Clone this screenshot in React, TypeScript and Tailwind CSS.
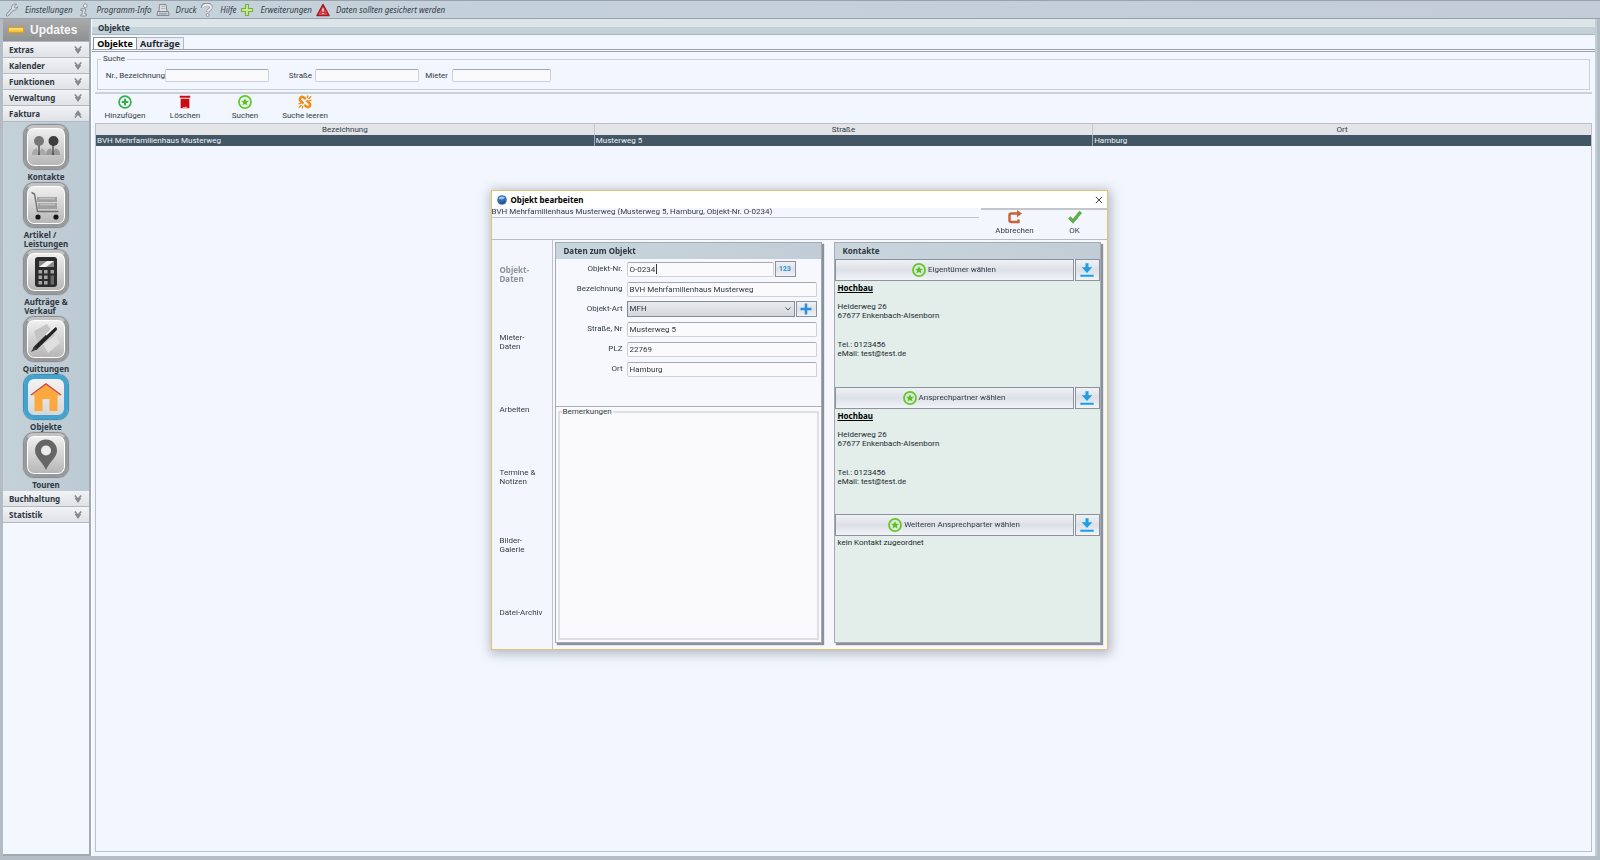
import type { ReactNode } from "react"

const accordionTop = ["Extras", "Kalender", "Funktionen", "Verwaltung"]
const accordionBottom = ["Buchhaltung", "Statistik"]

const tiles = [
  { label: ["Kontakte"], icon: <ContactsIcon /> },
  { label: ["Artikel /", "Leistungen"], icon: <CartIcon /> },
  { label: ["Aufträge &", "Verkauf"], icon: <CalculatorIcon /> },
  { label: ["Quittungen"], icon: <ReceiptIcon /> },
  { label: ["Objekte"], icon: <HouseIcon />, active: true },
  { label: ["Touren"], icon: <PinIcon /> },
]

const dialogNav = [["Objekt-", "Daten"], ["Mieter-", "Daten"], ["Arbeiten"], ["Termine &", "Notizen"], ["Bilder-", "Galerie"], ["Datei-Archiv"]]

const fieldClass =
  "min-w-0 rounded-[2px] border border-[#cdd1d7] border-t-[#a3aab2] bg-[#fafafc] px-[2px] text-[8px] leading-[10px] text-[#2f3842] outline-none"
const raisedClass =
  "flex items-center justify-center border border-[#8b929c] bg-linear-to-b from-[#eef1f5] via-[#dde0e6] to-[#f0f3f8]"
const boldFont = "font-['Noto_Sans',sans-serif] font-bold"

/* ---------- Icons ---------- */

function WrenchIcon() {
  return (
    <svg viewBox="0 0 14 14" className="size-[14px]">
      <path d="M2.6 11.8 8 5.8" stroke="#7d858d" strokeWidth="3.2" strokeLinecap="round" />
      <path d="M11.6 1.2 9.6 1a3.2 3.2 0 0 0-2.9 4.2c.5 1.6 2.3 2.2 3.8 1.7a3.1 3.1 0 0 0 2.2-3.2l-1.9 1.5-1.4-.7-.1-1.6z" fill="#dde1e5" stroke="#7d858d" strokeWidth=".8" />
      <path d="M2.6 11.8 8.4 5.4" stroke="#dde1e5" strokeWidth="1.6" strokeLinecap="round" />
    </svg>
  )
}

function InfoIcon() {
  return (
    <svg viewBox="0 0 14 14" className="size-[14px]">
      <circle cx="8.3" cy="2.7" r="1.9" fill="#eef0f2" stroke="#858c94" strokeWidth=".9" />
      <path d="M4 5.8h4.8L7.7 11h1.8l-.4 2H3.6l.4-1.5h1L5.8 7.5H3.8z" fill="#dfe2e5" stroke="#858c94" strokeWidth=".9" strokeLinejoin="round" />
    </svg>
  )
}

function PrinterIcon() {
  return (
    <svg viewBox="0 0 14 14" className="size-[14px]">
      <path d="M3.5 1.5h6.500l1 7H3z" fill="#dce0e3" stroke="#7b8289" strokeWidth=".9" />
      <path d="M5 3.500h4M5 5.500h4.400" stroke="#a5abb1" strokeWidth=".8" />
      <path d="M1.500 8.500h11l.5 4H1z" fill="#c9ced3" stroke="#7b8289" strokeWidth=".9" strokeLinejoin="round" />
      <path d="M3 10.800h8" stroke="#858c93" strokeWidth=".9" />
    </svg>
  )
}

function HelpIcon() {
  return (
    <svg viewBox="0 0 14 14" className="size-[14px]">
      <path d="M2.500 4.700C2 .2 11.500.2 11 4.500 10.800 7 8 6.400 7.700 9" fill="none" stroke="#848b93" strokeWidth="3.200" />
      <path d="M3 4.600C2.800.8 11.200.8 11 4.500 10.800 7 8 6.400 7.700 8.700" fill="none" stroke="#eceef0" strokeWidth="2" />
      <circle cx="7.600" cy="12" r="1.500" fill="#eceef0" stroke="#848b93" strokeWidth=".8" />
    </svg>
  )
}

function GreenPlusIcon() {
  return (
    <svg viewBox="0 0 14 14" className="size-[14px]">
      <path d="M5.500 1.500h3v4h4v3h-4v4h-3v-4h-4v-3h4z" fill="#c8ec8e" stroke="#7bab45" strokeWidth="1.100" strokeLinejoin="round" />
    </svg>
  )
}

function WarningIcon() {
  return (
    <svg viewBox="0 0 14 14" className="size-[14px]">
      <path d="M7 1.500 13 12.500H1z" fill="#cf2530" stroke="#a51a27" strokeWidth="1.500" strokeLinejoin="round" />
      <path d="M7 4.500 10.800 11.300H3.200z" fill="none" stroke="#e9848a" strokeWidth=".6" />
      <path d="M7 5.500v3.300M7 9.800v1.200" stroke="#fff" strokeWidth="1.300" />
    </svg>
  )
}

function Chevrons({ up }: { up?: boolean }) {
  return (
    <svg viewBox="0 0 8 8" className={up ? "size-2 rotate-180" : "size-2"} fill="none" stroke="#858a91" strokeWidth="1.600">
      <path d="M.8.500 4 4.200 7.200.500M1.500 3 4 6.500 6.500 3" />
    </svg>
  )
}

function AddIcon() {
  return (
    <svg viewBox="0 0 16 16" className="size-[14px]" fill="none" stroke="#35b04a">
      <circle cx="8" cy="8" r="6.800" strokeWidth="1.900" />
      <path d="M8 4.200v7.600M4.200 8h7.600" strokeWidth="2.400" />
    </svg>
  )
}

function TrashIcon() {
  return (
    <svg viewBox="0 0 16 16" className="size-[14px]" fill="#cc0a12">
      <path d="M2 .8h12v2.400H2zM3 4.200h10v11H3z" />
      <path d="M5 14.600c1-1.600 2-.3 3-.8s2-.8 3 .8z" fill="#f3d6da" />
    </svg>
  )
}

function StarIcon() {
  return (
    <svg viewBox="0 0 16 16" className="size-[14px]">
      <circle cx="8" cy="8" r="6.900" fill="none" stroke="#62cb23" strokeWidth="2" />
      <path d="m8 3.500 1.300 3 3.200.2-2.400 2.100.7 3.200L8 10.300 5.200 12l.7-3.200-2.400-2.100 3.200-.2z" fill="#58c41c" />
    </svg>
  )
}

function BrokenChainIcon() {
  return (
    <svg viewBox="0 0 16 16" className="size-[14px]" fill="none" stroke="#f08c14">
      <path d="M8.800 4.800 6.800 3C5.500 1.900 3.900 2 2.900 3S1.900 5.600 3 6.800l3.200 3.100M7.200 11.200l2 1.800c1.300 1.100 2.900 1 3.900 0s1-2.600-.1-3.800L9.800 6.100" strokeWidth="2.800" />
      <path d="m10.400 3.600.8-3M12 4.600l3-3.100M12.400 6.600l3-.6M5.600 12.400l-.8 3M4 11.400l-3 3.100M3.600 9.400l-3 .6" strokeWidth="1.500" />
    </svg>
  )
}

function DownloadIcon() {
  return (
    <svg viewBox="0 0 14 14" className="size-[14px]" fill="#1b9fe6">
      <path d="M5.500.3h3v4h3.800L7 10 1.700 4.300h3.800zM.3 11.800h13.400v1.900H.3z" />
    </svg>
  )
}

function CancelIcon() {
  return (
    <svg viewBox="0 0 14 14" className="size-[14px]">
      <path d="M9.500 3.500H3.200c-1.200 0-1.700.6-1.700 1.700v5.100c0 1.200.6 1.700 1.700 1.700h7.300V9.600" fill="none" stroke="#c8643c" strokeWidth="2.500" />
      <path d="M9 0 14 3.600 9 7.200z" fill="#c8643c" />
    </svg>
  )
}

function CheckIcon() {
  return (
    <svg viewBox="0 0 14 14" className="size-[14px]">
      <path d="M1.200 7.400 5 11.300 12.700 1.800" fill="none" stroke="#62ac4f" strokeWidth="3.400" />
    </svg>
  )
}

function ContactsIcon() {
  return (
    <svg viewBox="0 0 32 32" className="size-8">
      <path d="M2 24c0-5 3-7 7-7s7 2 7 7z" fill="#a9a9a9" />
      <path d="M16 24c0-5 3-7 7-7s7 2 7 7z" fill="#9a9a9a" />
      <path d="M7 17h4l-2 6zM21 17h4l-2 6z" fill="#dedede" />
      <path d="M9 14v10M23 14v10" stroke="#1d1d1d" strokeWidth="1.100" />
      <circle cx="9" cy="10" r="5" fill="#777" />
      <circle cx="23.500" cy="10" r="5" fill="#3d3d3d" />
    </svg>
  )
}

function CartIcon() {
  return (
    <svg viewBox="0 0 32 32" className="size-8">
      <path d="M7 8h20v5H7zM8 14h19v6H8z" fill="#a0a0a0" />
      <path d="M9 9.500h16M10 15.500h15" stroke="#c2c2c2" strokeWidth="1.500" />
      <path d="M1.500 3.500 4.500 5l3 17.500h21" fill="none" stroke="#707070" strokeWidth="1.400" />
      <circle cx="8" cy="28" r="2.600" fill="#151515" />
      <circle cx="26" cy="28" r="2.600" fill="#151515" />
    </svg>
  )
}

function CalculatorIcon() {
  return (
    <svg viewBox="0 0 32 32" className="size-8">
      <rect x="5" y="1" width="22" height="30" rx="3" fill="#2b2b2b" />
      <path d="M9 5h15v6H9z" fill="#8c8c8c" />
      <path d="m9 11 8-6h7l-8 6z" fill="#f2f2f2" />
      <path d="M8.500 14h3.600v3.600H8.500zM14 14h3.600v3.600H14zM8.500 19.500h3.600v3.600H8.500zM14 19.500h3.600v3.600H14zM8.500 25h3.600v3.600H8.500zM14 25h3.600v3.600H14zM20.500 14H24v3.600h-3.500z" fill="#a4a4a4" />
      <path d="M20.500 19.500H24v9.100h-3.500z" fill="#686868" />
    </svg>
  )
}

function ReceiptIcon() {
  return (
    <svg viewBox="0 0 32 32" className="size-8">
      <path d="M4 8 17 1l12 18-12 10-5-9-5-1z" fill="#c4c4c4" />
      <path d="m13 21 13-9 4 8-12 10z" fill="#dfdfdf" />
      <path d="M5.500 25 25 6" stroke="#242424" strokeWidth="4" strokeLinecap="round" />
      <path d="m16 12 9-8.500" stroke="#fafafa" strokeWidth="1.500" />
      <path d="m1 29 3.500-6 3 3z" fill="#3b3b3b" />
    </svg>
  )
}

function HouseIcon() {
  return (
    <svg viewBox="0 0 32 32" className="size-8">
      <path d="M4.500 30V14.500H2L16 3.500l14 11h-2.500V30h-8V18h-7v12z" fill="#fba83f" />
      <path d="M1 14 16 3l15 11" fill="none" stroke="#cf4a3b" strokeWidth="1.500" />
    </svg>
  )
}

function PinIcon() {
  return (
    <svg viewBox="0 0 32 32" className="size-8">
      <path d="M16 31C13 23 5 19 5 11.500a11 11 0 0 1 22 0C27 19 19 23 16 31z" fill="#666" />
      <circle cx="16" cy="11.500" r="5" fill="#ececec" />
    </svg>
  )
}

/* ---------- Main window ---------- */

const menu = [
  { label: "Einstellungen", icon: <WrenchIcon /> },
  { label: "Programm-Info", icon: <InfoIcon /> },
  { label: "Druck", icon: <PrinterIcon /> },
  { label: "Hilfe", icon: <HelpIcon /> },
  { label: "Erweiterungen", icon: <GreenPlusIcon /> },
  { label: "Daten sollten gesichert werden", icon: <WarningIcon /> },
]

function MenuBar() {
  return (
    <nav className="flex h-[19px] items-center gap-1 border-y border-[#98a2ac] bg-linear-to-r from-[#c6d3db] to-[#c3ccd7] pl-[5px]">
      {menu.map((m) => (
        <button key={m.label} className="flex items-center gap-[6px] font-['Noto_Sans',sans-serif] text-[8px] text-[#333b44] italic">
          {m.icon}
          {m.label}
        </button>
      ))}
    </nav>
  )
}

function AccordionHeader({ label, open }: { label: string; open?: boolean }) {
  return (
    <button className={`${boldFont} flex h-4 w-full items-center justify-between border-b border-[#b3b9c0] bg-linear-to-b from-[#f1f3f5] to-[#dfe2e6] pr-[7px] pl-[6px] text-[8px] text-[#2f3740]`}>
      {label}
      <Chevrons up={open} />
    </button>
  )
}

function Sidebar() {
  return (
    <aside className="flex w-[88px] shrink-0 flex-col border-r-2 border-b-2 border-[#a2a9b2] bg-[#f3f7fe]">
      <button className="flex h-[23px] items-center gap-[6px] border-b border-[#b3b9c0] bg-linear-to-b from-[#a9aaab] to-[#8e9091] pl-[5px] font-['Liberation_Sans',sans-serif] text-[12px] font-bold text-[#f6f6f6]">
        <span className="h-[6px] w-4 rounded-[1px] border border-[#d8a313] bg-linear-to-b from-[#ffe27a] to-[#f5bd1c]" />
        Updates
      </button>
      {accordionTop.map((a) => (
        <AccordionHeader key={a} label={a} />
      ))}
      <AccordionHeader label="Faktura" open />
      <div className="flex flex-col items-center bg-linear-to-r from-[#c5d1d9] to-[#bccad3] pt-[3px]">
        {tiles.map((t) => (
          <button key={t.label[0]} className={`${boldFont} flex flex-col items-center text-[8px] leading-[9px] text-[#2f3740]`}>
            <span
              className={
                t.active
                  ? "flex size-11 items-center justify-center rounded-[10px] border-4 border-[#41a3cf] bg-linear-to-b from-[#f3f3f3] to-[#d4d6d8] shadow-[0_0_1px_1px_#3b88ab]"
                  : "flex size-11 items-center justify-center rounded-[10px] border-[3px] border-[#999] border-t-[#c2c2c2] bg-linear-to-b from-[#f1f1f1] to-[#b5b5b5] shadow-[inset_0_0_0_1px_#fff,0_0_1px_1px_#85898c]"
              }
            >
              {t.icon}
            </span>
            <span className="pt-[3px] pb-[2px] text-left">
              {t.label.map((line) => (
                <span key={line} className="block">{line}</span>
              ))}
            </span>
          </button>
        ))}
      </div>
      {accordionBottom.map((a) => (
        <AccordionHeader key={a} label={a} />
      ))}
    </aside>
  )
}

function ToolButton({ label, icon }: { label: string; icon: ReactNode }) {
  return (
    <button className="flex w-[60px] flex-col items-center gap-[2px] text-[8px] leading-[10px] whitespace-nowrap text-[#333c46]">
      {icon}
      {label}
    </button>
  )
}

function SearchPanel() {
  return (
    <fieldset className="mx-[5px] mt-[2px] flex h-9 items-center border border-[#c8cfd7] pt-[5px] text-[8px] text-[#333c46]">
      <legend className="ml-[3px] px-[2px] leading-[10px]">Suche</legend>
      <label htmlFor="nr" className="w-[67px] text-right whitespace-nowrap">Nr., Bezeichnung</label>
      <input id="nr" className={`${fieldClass} h-[13px] w-[104px]`} />
      <label htmlFor="strasse" className="w-[46px] pr-[3px] text-right">Straße</label>
      <input id="strasse" className={`${fieldClass} h-[13px] w-[104px]`} />
      <label htmlFor="mieter" className="w-[33px] pr-1 text-right">Mieter</label>
      <input id="mieter" className={`${fieldClass} h-[13px] w-[99px]`} />
    </fieldset>
  )
}

function MainPanel() {
  return (
    <main className="mr-[2px] flex min-w-0 flex-1 flex-col border-l border-white bg-[#f2f6fe]">
      <h1 className={`${boldFont} h-4 border-b border-[#a9b5bd] bg-linear-to-b from-[#dbe5ea] from-55% to-[#c3d1d8] to-55% pl-[6px] text-[8px] leading-[17px] text-[#2f3740]`}>
        Objekte
      </h1>
      <div className={`${boldFont} flex h-[17px] items-end border-b-[3px] border-double border-[#9ba2ab] pt-[2px] pl-[1px] text-[9px] leading-3`}>
        <button className="h-full w-11 border border-b-0 border-[#8d949c] bg-white text-black">Objekte</button>
        <button className="h-full w-[47px] border border-b-0 border-l-0 border-[#b3bac2] bg-[#e9eef4] text-[#22282e]">Aufträge</button>
      </div>
      <SearchPanel />
      <div className="mx-[3px] mt-[2px] flex h-[31px] items-start border-t-2 border-[#ccd1d7] pt-[1px]">
        <ToolButton label="Hinzufügen" icon={<AddIcon />} />
        <ToolButton label="Löschen" icon={<TrashIcon />} />
        <ToolButton label="Suchen" icon={<StarIcon />} />
        <ToolButton label="Suche leeren" icon={<BrokenChainIcon />} />
      </div>
      <div className="mx-[3px] mb-1 flex-1 border border-[#b9c0c8]">
        <table className="w-full table-fixed border-collapse text-[8px] leading-[10px]">
          <thead>
            <tr className="h-[11px] bg-[#e2e4e8] text-[#333c46]">
              <th className="border-r border-[#c3c8ce] p-0 font-normal">Bezeichnung</th>
              <th className="border-r border-[#c3c8ce] p-0 font-normal">Straße</th>
              <th className="p-0 font-normal">Ort</th>
            </tr>
          </thead>
          <tbody>
            <tr className="h-[11px] bg-[#425666] text-[#eef2f5]">
              <td className="border-r border-[#9aa6b0] py-0 pr-0 pl-[1px]">BVH Mehrfamilienhaus Musterweg</td>
              <td className="border-r border-[#9aa6b0] py-0 pr-0 pl-[1px]">Musterweg 5</td>
              <td className="py-0 pr-0 pl-[1px]">Hamburg</td>
            </tr>
          </tbody>
        </table>
      </div>
    </main>
  )
}

/* ---------- Dialog ---------- */

function FormRow({ id, label, children }: { id: string; label: string; children: ReactNode }) {
  return (
    <div className="flex h-5 items-center">
      <label htmlFor={id} className="w-[67px] shrink-0 pr-1 text-right">{label}</label>
      {children}
    </div>
  )
}

function Panel({ title, children }: { title: string; children: ReactNode }) {
  return (
    <section className="flex flex-1 flex-col border border-[#a4abb4] shadow-[2px_2px_1px_#8b919a]">
      <h2 className={`${boldFont} h-4 shrink-0 bg-linear-to-r from-[#c9d6de] to-[#c2ccd6] pl-2 text-[8px] leading-[15px] text-[#2f3740]`}>{title}</h2>
      {children}
    </section>
  )
}

function ObjectForm() {
  return (
    <Panel title="Daten zum Objekt">
      <div className="h-[147px] shrink-0 pr-1 pl-1 text-[8px] text-[#333c46]">
        <FormRow id="objnr" label="Objekt-Nr.">
          <div className="relative flex w-[147px]">
            <input id="objnr" defaultValue="O-0234" className={`${fieldClass} h-[15px] w-full`} />
            {/* text cursor */}
            <span className="absolute top-[2px] left-[29px] h-[10px] w-[1px] bg-[#2f3842]" />
          </div>
          <button className={`${raisedClass} ml-[1px] h-4 w-[21px] text-[7px] font-bold text-[#2d93d3]`}>123</button>
        </FormRow>
        <FormRow id="bez" label="Bezeichnung">
          <input id="bez" defaultValue="BVH Mehrfamilienhaus Musterweg" className={`${fieldClass} h-[15px] flex-1`} />
        </FormRow>
        <FormRow id="art" label="Objekt-Art">
          <div className="relative flex-1">
            <select id="art" className="block h-4 w-full appearance-none border border-[#858c95] bg-linear-to-b from-[#e7e9ed] to-[#d4d7dc] px-[2px] text-[8px] text-[#2f3842]">
              <option>MFH</option>
            </select>
            <svg viewBox="0 0 6 4" className="pointer-events-none absolute top-[6px] right-1 h-1 w-[6px]" fill="none" stroke="#4b525a">
              <path d="m.5.500 2.500 2.500L5.500.5" />
            </svg>
          </div>
          <button aria-label="Objekt-Art hinzufügen" className={`${raisedClass} ml-[1px] h-4 w-[21px]`}>
            <svg viewBox="0 0 12 12" className="size-3">
              <path d="M6 .5v11M.5 6h11" stroke="#2b8fd8" strokeWidth="2.500" />
            </svg>
          </button>
        </FormRow>
        <FormRow id="str" label="Straße, Nr">
          <input id="str" defaultValue="Musterweg 5" className={`${fieldClass} h-[15px] flex-1`} />
        </FormRow>
        <FormRow id="plz" label="PLZ">
          <input id="plz" defaultValue="22769" className={`${fieldClass} h-[15px] flex-1`} />
        </FormRow>
        <FormRow id="ort" label="Ort">
          <input id="ort" defaultValue="Hamburg" className={`${fieldClass} h-[15px] flex-1`} />
        </FormRow>
      </div>
      <div className="flex flex-1 flex-col border-t border-[#a9b0b8] bg-[#fafafc] px-[2px] pb-[2px]">
        <fieldset className="flex flex-1 flex-col border-2 border-[#dcdfe4]">
          <legend className="ml-[2px] px-[1px] text-[8px] leading-[10px] text-[#333c46]">
            <label htmlFor="bem">Bemerkungen</label>
          </legend>
          <textarea id="bem" className="h-full w-full flex-1 resize-none bg-[#fafafc] text-[8px] outline-none" />
        </fieldset>
      </div>
    </Panel>
  )
}

function Contact({ label, children }: { label: string; children: ReactNode }) {
  return (
    <div className="flex flex-1 flex-col">
      <div className="flex h-[22px] shrink-0 gap-[1px]">
        <button className={`${raisedClass} flex-1 gap-[2px] text-[8px] text-[#333c46]`}>
          <StarIcon />
          {label}
        </button>
        <button aria-label={`${label} – übernehmen`} className={`${raisedClass} w-[25px]`}>
          <DownloadIcon />
        </button>
      </div>
      <div className="flex-1 bg-[#e3ede9] px-[3px] pt-[2px] text-[8px] leading-[9px] text-[#222a30]">{children}</div>
    </div>
  )
}

function Address() {
  return (
    <>
      <p className={`${boldFont} text-black underline`}>Hochbau</p>
      <p className="pt-[10px]">Heiderweg 26</p>
      <p>67677 Enkenbach-Alsenborn</p>
      <p className="pt-5">Tel.: 0123456</p>
      <p>eMail: test@test.de</p>
    </>
  )
}

function ObjectDialog() {
  return (
    <div role="dialog" aria-label="Objekt bearbeiten" className="flex h-[460px] w-[617px] flex-col border border-[#e3c273] bg-[#f3f6fd] shadow-[1px_2px_10px_2px_rgba(90,95,105,0.4)]">
      <header className={`${boldFont} flex h-[17px] shrink-0 items-center bg-white pr-1 pl-[5px] text-[8px] text-black`}>
        <svg viewBox="0 0 10 10" className="mr-1 size-[10px]">
          <circle cx="5" cy="5" r="4.800" fill="#2f6cb0" />
          <path d="M1.500 4c1-3 5-3 6.500-1L5 4.500z" fill="#9cc7ea" />
          <path d="M3 7.500c2 1 4 .5 5-1.500" stroke="#194378" fill="none" />
        </svg>
        Objekt bearbeiten
        <button aria-label="Schließen" className="ml-auto">
          <svg viewBox="0 0 8 8" className="size-2" stroke="#333" strokeWidth=".9">
            <path d="m.8.800 6.400 6.400M7.200.8.800 7.200" />
          </svg>
        </button>
      </header>
      <div className="flex h-8 shrink-0 border-b border-[#b5bcc4]">
        <div className="flex-1">
          <p className="h-[7px] overflow-hidden text-[8px] leading-[7px] text-[#333c46]">BVH Mehrfamilienhaus Musterweg (Musterweg 5, Hamburg, Objekt-Nr. O-0234)</p>
          <div className="mt-[2px] mr-[2px] border-t border-[#c0c6cd]" />
        </div>
        <div className="flex border-t-2 border-[#c3c7cc] pr-[2px] pl-1">
          <ToolButton label="Abbrechen" icon={<CancelIcon />} />
          <ToolButton label="OK" icon={<CheckIcon />} />
        </div>
      </div>
      <div className="flex min-h-0 flex-1">
        <nav className="flex w-[61px] shrink-0 flex-col border-r border-[#bcc3cb] pb-[3px] pl-2">
          {dialogNav.map((lines, i) => (
            <a
              key={lines[0]}
              href="#"
              className={`flex flex-1 flex-col justify-center text-[8px] leading-[9px] ${i === 0 ? `${boldFont} text-[#8b9299]` : "text-[#333c46]"}`}
            >
              {lines.map((line) => (
                <span key={line}>{line}</span>
              ))}
            </a>
          ))}
        </nav>
        <div className="flex flex-1 gap-3 bg-[#f6f8fd] pt-[2px] pr-[6px] pb-[6px] pl-[2px]">
          <ObjectForm />
          <Panel title="Kontakte">
            <Contact label="Eigentümer wählen">
              <Address />
            </Contact>
            <Contact label="Ansprechpartner wählen">
              <Address />
            </Contact>
            <Contact label="Weiteren Ansprechparter wählen">kein Kontakt zugeordnet</Contact>
          </Panel>
        </div>
      </div>
    </div>
  )
}

export default function App() {
  return (
    <div className="flex min-h-screen flex-col bg-[#c3cdd6] font-['Roboto','Noto_Sans',sans-serif]">
      <MenuBar />
      <div className="flex flex-1 border-x-[3px] border-b-4 border-[#b3bcc5]">
        <Sidebar />
        <MainPanel />
      </div>
      <div className="fixed inset-0 flex items-center justify-center pr-[2px] pb-5">
        <ObjectDialog />
      </div>
    </div>
  )
}
